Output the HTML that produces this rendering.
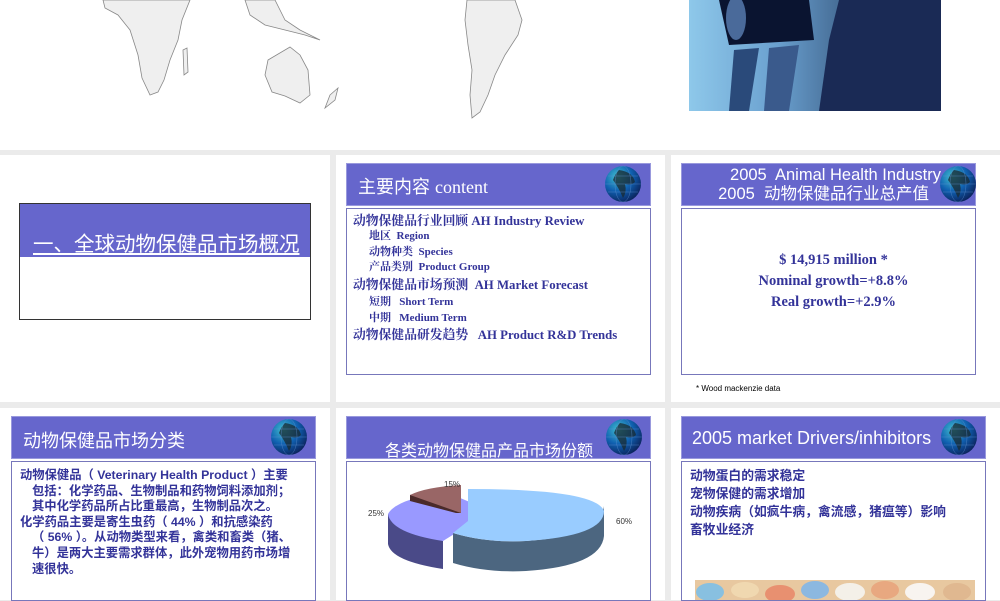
<!DOCTYPE html>
<html><head><meta charset="utf-8"><style>
*{margin:0;padding:0;box-sizing:border-box}
body{width:1000px;height:600px;position:relative;overflow:hidden;background:#ebebeb;font-family:"Liberation Serif","Noto Serif CJK SC",serif}
.a{position:absolute}
.p{position:absolute;background:#fff}
.hd{position:absolute;background:#6666cc;border:1px solid #9999dd;color:#fff;font-family:"Liberation Sans","Noto Sans CJK SC",sans-serif}
.bx{position:absolute;border:1px solid #7777bb;background:#fff}
.t{color:#333399;font-weight:bold;font-family:"Liberation Serif","Noto Serif CJK SC",serif}
.s{color:#333399;font-weight:bold;font-family:"Liberation Sans","Noto Sans CJK SC",sans-serif}
svg.g{position:absolute}
</style></head><body>
<div class="p" style="left:0;top:0;width:1000px;height:150px"></div>
<svg class="a" style="left:0;top:0" width="1000" height="150">
<g fill="#efefef" stroke="#888" stroke-width="0.8">
<path d="M103,0 L190,0 L182,20 L178,40 L170,60 L164,80 L158,92 L150,95 L142,78 L138,55 L130,30 L118,15 L105,8 Z"/>
<path d="M183,50 L187,48 L188,72 L184,75 Z"/>
<path d="M268,60 L290,47 L300,55 L308,70 L310,95 L300,103 L285,96 L272,92 L265,75 Z"/>
<path d="M245,0 L275,0 L285,20 L300,30 L320,40 L305,35 L285,30 L265,25 L250,15 Z"/>
<path d="M330,95 L338,88 L335,100 L325,108 Z"/>
<path d="M467,0 L515,0 L522,20 L518,35 L505,55 L495,75 L488,95 L480,112 L472,118 L470,95 L472,70 L468,45 L465,20 Z"/>
</g></svg>
<svg class="a" style="left:689px;top:0" width="252" height="111">
<defs><linearGradient id="bg" x1="0" y1="0" x2="1" y2="0"><stop offset="0" stop-color="#8ec8ea"/><stop offset="0.35" stop-color="#6aa0cf"/><stop offset="1" stop-color="#0c1a3a"/></linearGradient></defs>
<rect width="252" height="111" fill="url(#bg)"/>
<path d="M30,0 L120,0 L125,40 L40,45 Z" fill="#0a1430"/>
<path d="M45,50 L70,48 L60,111 L40,111 Z" fill="#2a4a7a"/>
<path d="M80,48 L110,45 L100,111 L75,111 Z" fill="#3a5a8c"/>
<path d="M150,0 L252,0 L252,111 L130,111 L140,40 Z" fill="#1a2a55"/>
<ellipse cx="47" cy="18" rx="10" ry="22" fill="#4a6a9a"/>
</svg>

<div class="p" style="left:0;top:155px;width:330px;height:247px"></div>
<div class="p" style="left:336px;top:155px;width:329px;height:247px"></div>
<div class="p" style="left:671px;top:155px;width:329px;height:247px"></div>
<div class="p" style="left:0;top:408px;width:330px;height:192px"></div>
<div class="p" style="left:336px;top:408px;width:329px;height:192px"></div>
<div class="p" style="left:671px;top:408px;width:329px;height:192px"></div>

<div class="a" style="left:19px;top:203px;width:292px;height:117px;border:1px solid #333;background:#fff"></div>
<div class="a" style="left:19px;top:203px;width:292px;height:54px;background:#6666cc;border:1px solid #333;border-bottom:none"></div>
<div class="a" style="left:33px;top:227px;color:#fff;font-size:20.5px;text-decoration:underline;font-family:'Liberation Sans','Noto Sans CJK SC',sans-serif;white-space:nowrap">一、全球动物保健品市场概况</div>

<div class="hd" style="left:346px;top:163px;width:305px;height:43px"><span style="position:absolute;left:11px;top:9px;font-size:18px">主要内容 <span style="font-family:'Liberation Serif',serif">content</span></span></div>
<div class="bx" style="left:346px;top:208px;width:305px;height:167px"></div>
<div class="a t" style="left:353px;top:213px;font-size:12.8px;line-height:16px;white-space:nowrap">
<div>动物保健品行业回顾 AH Industry Review</div>
<div style="font-size:11px;padding-left:16px;line-height:15.5px">地区&nbsp; Region</div>
<div style="font-size:11px;padding-left:16px;line-height:15.5px">动物种类&nbsp; Species</div>
<div style="font-size:11px;padding-left:16px;line-height:15.5px">产品类别&nbsp; Product Group</div>
<div style="line-height:18px">动物保健品市场预测&nbsp; AH Market Forecast</div>
<div style="font-size:11px;padding-left:16px;line-height:16px">短期&nbsp;&nbsp; Short Term</div>
<div style="font-size:11px;padding-left:16px;line-height:16px">中期&nbsp;&nbsp; Medium Term</div>
<div style="line-height:18px">动物保健品研发趋势&nbsp;&nbsp; AH Product R&amp;D Trends</div>
</div>

<div class="hd" style="left:681px;top:163px;width:295px;height:43px"></div>
<div class="a" style="left:681px;top:166px;width:260px;text-align:right;color:#fff;font-family:'Liberation Sans','Noto Sans CJK SC',sans-serif;font-size:16.5px;line-height:19px;white-space:nowrap"><div>2005&nbsp; Animal Health Industry</div><div style="padding-right:12px">2005&nbsp; 动物保健品行业总产值</div></div>
<div class="bx" style="left:681px;top:208px;width:295px;height:167px"></div>
<div class="a t" style="left:681px;top:250px;width:305px;text-align:center;font-size:14.5px;line-height:21px">$ 14,915 million *<br>Nominal growth=+8.8%<br>Real growth=+2.9%</div>
<div class="a" style="left:696px;top:384px;font-size:8px;font-family:'Liberation Sans',sans-serif">* Wood mackenzie data</div>

<div class="hd" style="left:11px;top:416px;width:305px;height:43px"><span style="position:absolute;left:11px;top:10px;font-size:18px">动物保健品市场分类</span></div>
<div class="bx" style="left:11px;top:461px;width:305px;height:140px"></div>
<div class="a s" style="left:20px;top:468px;font-size:12.3px;line-height:15.6px;white-space:nowrap">
<div>动物保健品（ Veterinary Health Product ）主要</div>
<div style="padding-left:12px">包括：化学药品、生物制品和药物饲料添加剂；</div>
<div style="padding-left:12px">其中化学药品所占比重最高，生物制品次之。</div>
<div>化学药品主要是寄生虫药（ 44% ）和抗感染药</div>
<div style="padding-left:12px">（ 56% ）。从动物类型来看，禽类和畜类（猪、</div>
<div style="padding-left:12px">牛）是两大主要需求群体，此外宠物用药市场增</div>
<div style="padding-left:12px">速很快。</div>
</div>

<div class="hd" style="left:346px;top:416px;width:305px;height:43px"><span style="position:absolute;left:38px;top:20px;font-size:16px">各类动物保健品产品市场份额</span></div>
<div class="bx" style="left:346px;top:461px;width:305px;height:140px"></div>
<svg class="a" style="left:346px;top:461px" width="305" height="139">
<path d="M42,53 L42,83 Q45,100 97,108 L97,80 Z" fill="#4a4a88"/>
<path d="M42,53 Q50,38 100,31 L145,50 L97,80 Q45,72 42,53 Z" fill="#9999ff"/>
<path d="M64,34 L64,40 L110,52 L115,52 L115,26 Z" fill="#4a2a2a"/>
<path d="M64,34 Q80,26 115,24 L115,52 Z" fill="#996666"/>
<path d="M107,72 L107,102 Q140,112 180,110 Q255,105 258,75 L258,45 Q255,75 180,80 Q140,82 107,72 Z" fill="#4c6680"/>
<path d="M122,28 Q250,28 258,50 Q258,75 180,80 Q140,82 107,72 L122,60 Z" fill="#99ccff"/>
<text x="98" y="26" font-size="8" font-family="Liberation Sans" fill="#333">15%</text>
<text x="22" y="55" font-size="8" font-family="Liberation Sans" fill="#333">25%</text>
<text x="270" y="63" font-size="8" font-family="Liberation Sans" fill="#333">60%</text>
</svg>

<div class="hd" style="left:681px;top:416px;width:305px;height:43px"><span style="position:absolute;left:10px;top:11px;font-size:18px">2005 market Drivers/inhibitors</span></div>
<div class="bx" style="left:681px;top:461px;width:305px;height:140px"></div>
<div class="a s" style="left:690px;top:467px;font-size:12.8px;line-height:18px">动物蛋白的需求稳定<br>宠物保健的需求增加<br>动物疾病（如疯牛病，禽流感，猪瘟等）影响<br>畜牧业经济</div>
<svg class="a" style="left:695px;top:580px" width="280" height="20">
<rect width="280" height="20" fill="#e8c8a0"/>
<ellipse cx="15" cy="12" rx="14" ry="9" fill="#88c0e0"/><ellipse cx="50" cy="10" rx="14" ry="8" fill="#f0d8b0"/><ellipse cx="85" cy="14" rx="15" ry="9" fill="#e89070"/><ellipse cx="120" cy="10" rx="14" ry="9" fill="#8cb8e0"/><ellipse cx="155" cy="12" rx="15" ry="9" fill="#f4f0e8"/><ellipse cx="190" cy="10" rx="14" ry="9" fill="#e8a880"/><ellipse cx="225" cy="12" rx="15" ry="9" fill="#f8f4f0"/><ellipse cx="262" cy="12" rx="14" ry="9" fill="#e0b890"/>
</svg>

<svg width="0" height="0" style="position:absolute"><defs><radialGradient id="gl" cx="0.35" cy="0.3" r="0.8"><stop offset="0" stop-color="#40c0d0"/><stop offset="0.5" stop-color="#1060b0"/><stop offset="1" stop-color="#0a1a50"/></radialGradient>
<g id="glb"><circle cx="18" cy="18" r="18" fill="url(#gl)"/><path d="M14,4 Q28,6 30,16 Q26,20 20,18 Q22,26 18,32 Q14,22 8,14 Q10,8 14,4Z" fill="#1a2a30" opacity="0.75"/><g stroke="#6090d0" stroke-width="0.5" fill="none" opacity="0.7"><ellipse cx="18" cy="18" rx="8" ry="18"/><line x1="0" y1="18" x2="36" y2="18"/><line x1="3" y1="10" x2="33" y2="10"/><line x1="3" y1="26" x2="33" y2="26"/></g></g></defs></svg>
<svg class="g" style="left:605px;top:166px" width="36" height="36"><use href="#glb"/></svg>
<svg class="g" style="left:940px;top:166px" width="36" height="36"><use href="#glb"/></svg>
<svg class="g" style="left:271px;top:419px" width="36" height="36"><use href="#glb"/></svg>
<svg class="g" style="left:606px;top:419px" width="36" height="36"><use href="#glb"/></svg>
<svg class="g" style="left:941px;top:419px" width="36" height="36"><use href="#glb"/></svg>
</body></html>
